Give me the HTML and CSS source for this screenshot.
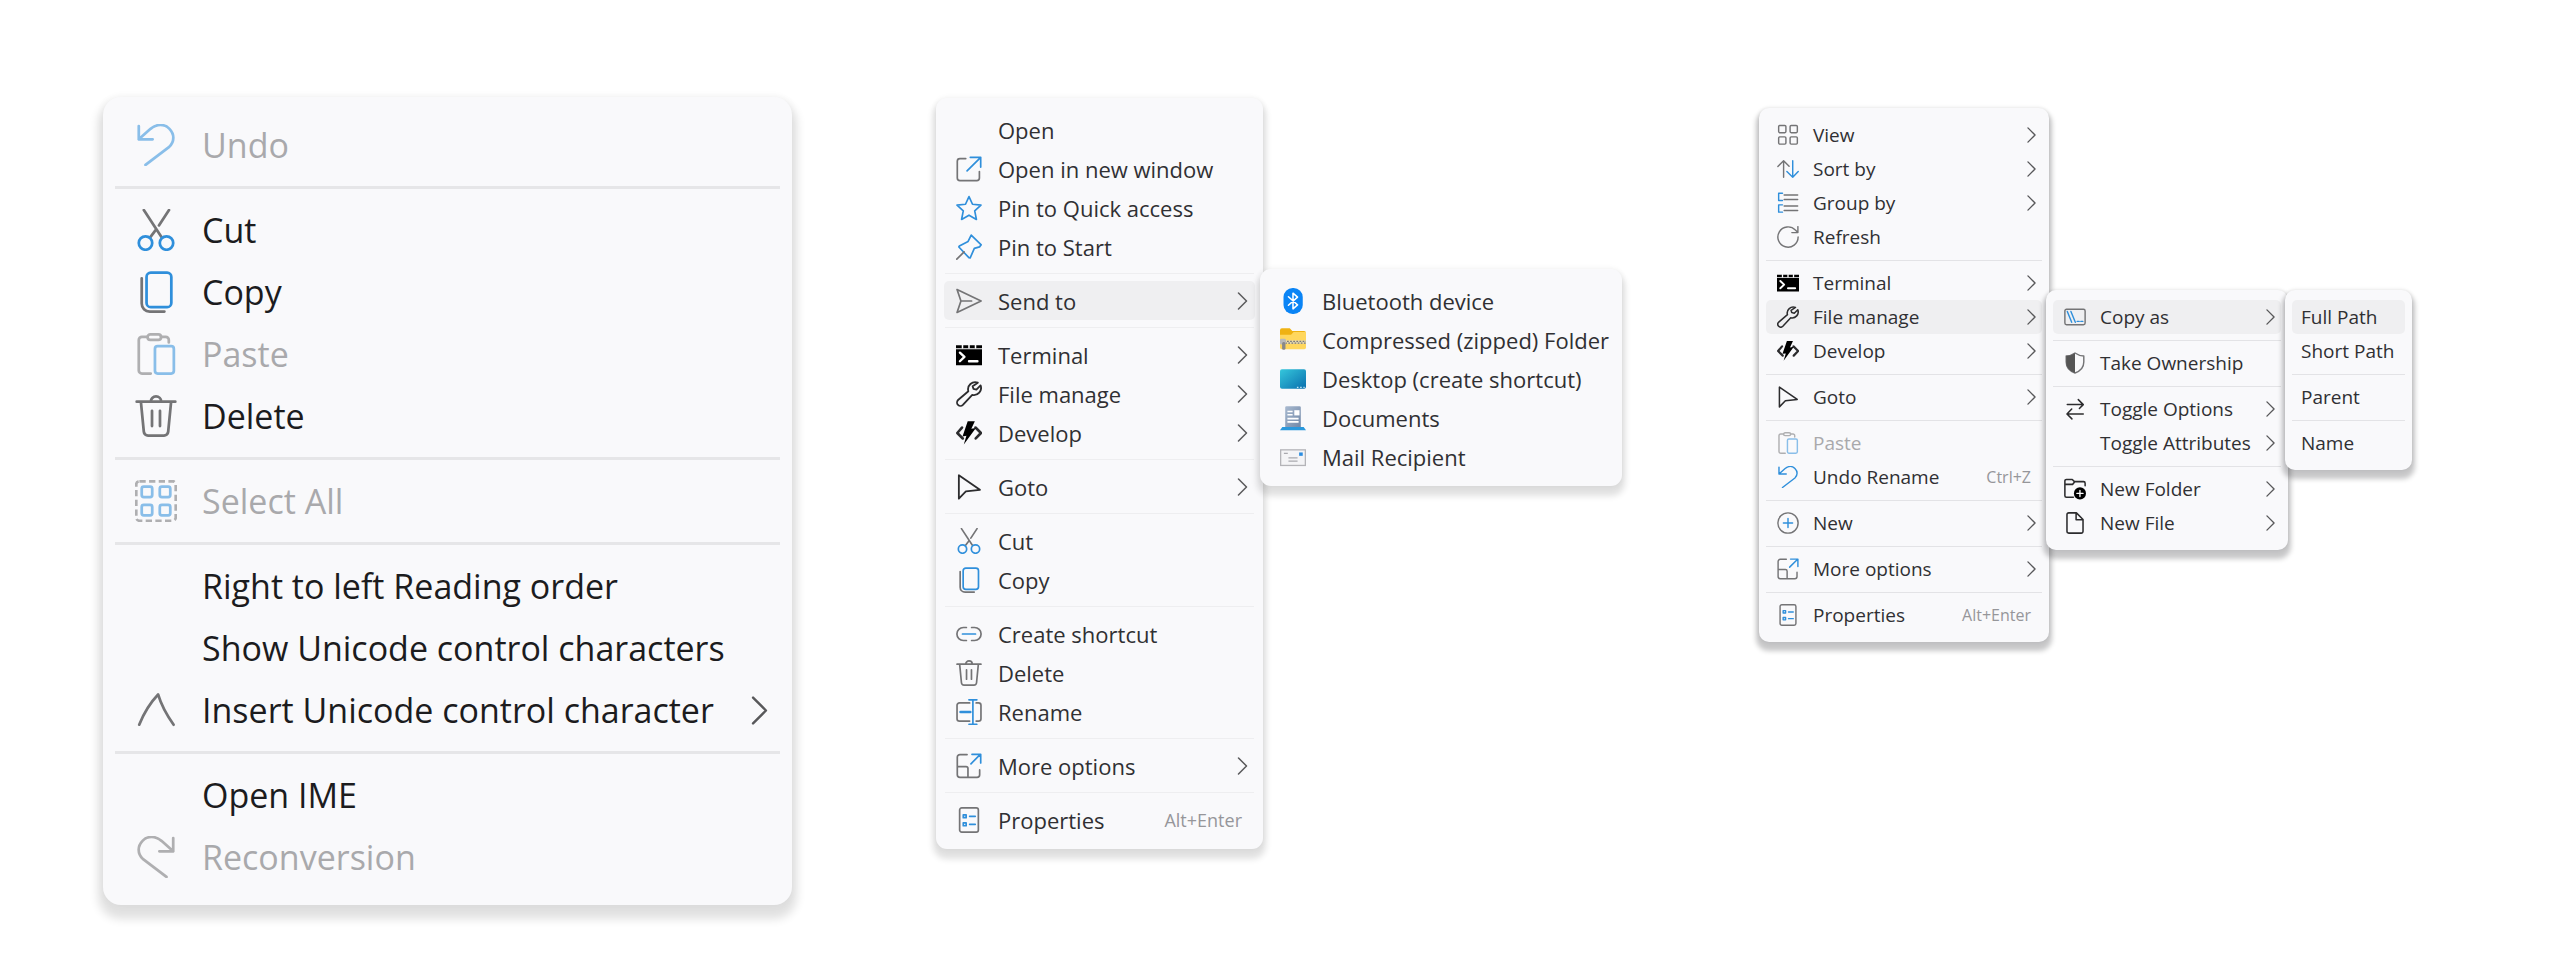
FILE: index.html
```
<!DOCTYPE html>
<html lang="en">
<head>
<meta charset="utf-8">
<title>Context menus</title>
<link rel="stylesheet" href="styles.css">
</head>
<body>
<svg class="sprite" aria-hidden="true">
  <defs>
    <linearGradient id="g-desktop" x1="0" y1="0" x2="1" y2="1"><stop offset="0" stop-color="#35c7dc"/><stop offset="1" stop-color="#0a6fae"/></linearGradient>
    <linearGradient id="g-doc" x1="0" y1="0" x2="1" y2="1"><stop offset="0" stop-color="#a9bad0"/><stop offset="1" stop-color="#6f86a6"/></linearGradient>
  </defs>
  <symbol id="i-undo" viewBox="0 0 20 20"><path class="b" d="M1.8 1v6.3h6.6M1.8 7.3l5.6-5C10.4-.2 14-.1 16.3 2.2c2.6 2.6 2.6 6.2 0 8.7L5 19.5"/></symbol>
  <symbol id="i-redo" viewBox="0 0 20 20"><path class="k" d="M18.2 1v6.3h-6.6M18.2 7.3l-5.6-5C9.6-.2 6-.1 3.7 2.2c-2.6 2.6-2.6 6.2 0 8.7L15 19.5"/></symbol>
  <symbol id="i-cut" viewBox="0 0 20 20"><path class="k" d="M4.2.5L12.6 13.3M16.2.5l-4.8 7.3M10 9.800l-2.6 3.5"/><circle class="b" cx="5" cy="16.2" r="3.2"/><circle class="b" cx="15" cy="16.2" r="3.2"/></symbol>
  <symbol id="i-copy" viewBox="0 0 20 20"><path class="k" d="M3.2 3.5v12c0 2.2 1.6 3.8 3.8 3.8h7"/><rect class="b" x="5.5" y=".8" width="11.8" height="16.4" rx="2"/></symbol>
  <symbol id="i-paste" viewBox="0 0 20 20"><path class="k" d="M6 1.800H3.3a1.500 1.500 0 0 0-1.500 1.500v14.500a1.500 1.500 0 0 0 1.500 1.500h4.200M12.400 1.800h2.200a1.500 1.500 0 0 1 1.500 1.500v1.200"/><rect class="k" x="6" y=".7" width="6.4" height="2.6" rx="1.3"/><rect class="b" x="9.5" y="6.3" width="9" height="13" rx="1.3"/></symbol>
  <symbol id="i-delete" viewBox="0 0 20 20"><path class="k" d="M.8 3.200h18.400M7.500 3.200a2.500 2.500 0 0 1 5 0M2.800 3.200l1.400 14.300a2 2 0 0 0 2 1.800h7.600a2 2 0 0 0 2-1.800l1.400-14.300M8.100 7.500v7.300M11.900 7.500v7.300"/></symbol>
  <symbol id="i-select" viewBox="0 0 20 20"><rect class="k butt" x=".6" y=".6" width="18.8" height="18.8" rx="1.5" stroke-dasharray="3 1.6"/><rect class="b" x="3.2" y="3.2" width="5" height="5" rx="1"/><rect class="b" x="11.8" y="3.2" width="5" height="5" rx="1"/><rect class="b" x="3.2" y="11.8" width="5" height="5" rx="1"/><rect class="b" x="11.8" y="11.8" width="5" height="5" rx="1"/></symbol>
  <symbol id="i-caret" viewBox="0 0 20 20"><path class="k" d="M2 17C4.400 11 7 6.800 11 2.600c1.600 5.400 4.200 10 7.400 14.400"/></symbol>
  <symbol id="i-window" viewBox="0 0 20 20"><path class="k" d="M7.500 2H3a2 2 0 0 0-2 2v13a2 2 0 0 0 2 2h13a2 2 0 0 0 2-2v-5"/><path class="b" d="M8.500 11.500L19 1M11 1h8v7.500"/></symbol>
  <symbol id="i-star" viewBox="0 0 20 20"><path class="b" d="M10 1.200l2.700 5.900 6.500.7-4.800 4.400 1.300 6.600-5.700-3.300-5.700 3.300 1.300-6.600L.8 7.800l6.500-.7z"/></symbol>
  <symbol id="i-pin" viewBox="0 0 20 20"><path class="b" d="M11.700.8l7.700 7.500-1.300 1.600-4 1.200-3.200 7.300-1-.2L2.200 10l.4-.8 6.700-3.500z"/><path class="k" d="M6.200 13.800L.6 19.400"/></symbol>
  <symbol id="i-send" viewBox="0 0 20 20"><path class="k" d="M.8 1.200L19.300 10 .8 18.800 3.800 10zM3.800 10H12"/></symbol>
  <symbol id="i-terminal" viewBox="0 0 20 20"><path d="M0 2.500h20v2.300H0zM0 5.500h20v12.300H0z"/><path class="w" d="M3 8.200l3.500 3.300L3 14.800M10 14.800h6.500"/><path class="w thin" d="M5 2.500v2M10 2.500v2M15 2.500v2"/></symbol>
  <symbol id="i-wrench" viewBox="0 0 20 20"><path class="d" d="M16.800 1.300a5.500 5.500 0 0 0-7.300 6.600L1.600 14.600a2.600 2.600 0 0 0 3.700 3.800l7.200-7.700a5.500 5.500 0 0 0 6.400-7.300l-3.200 3.200-2.300-.6-.6-2z"/></symbol>
  <symbol id="i-develop" viewBox="0 0 20 20"><path class="d bold" d="M4.600 5.800L1 10l4.200 4.200M15 5.800L19.200 10l-4 4.200"/><path d="M9 1h5.500L11.800 6.800l3.500-.6L6 18.800l2-6.600-3 .4z"/></symbol>
  <symbol id="i-goto" viewBox="0 0 20 20"><path class="d" d="M2.200 1v18l5.400-5.600 10.800-1.200z"/></symbol>
  <symbol id="i-link" viewBox="0 0 20 20"><path class="k" d="M8 5H5.700a5 5 0 0 0 0 10H8M12 5h2.300a5 5 0 0 1 0 10H12"/><path class="b" d="M5 10h10"/></symbol>
  <symbol id="i-rename" viewBox="0 0 20 20"><path class="k" d="M10.500 3H2.700A1.900 1.900 0 0 0 .8 4.900v10.200A1.900 1.900 0 0 0 2.700 17h7.800M15.500 3h1.800a1.900 1.900 0 0 1 1.900 1.900v10.200a1.900 1.900 0 0 1-1.900 1.900h-1.800"/><path class="b" d="M13 .8v18.400M10 .6h6M10 19.400h6"/><path class="b bold" d="M3.500 10h7.500"/></symbol>
  <symbol id="i-more" viewBox="0 0 20 20"><path class="k" d="M8.500 1.200H3a2 2 0 0 0-2 2V16.800a2 2 0 0 0 2 2h13.200a2 2 0 0 0 2-2V13M1 10.500h6.700a1.500 1.500 0 0 1 1.500 1.500v6.800"/><path class="b" d="M11.500 8.300l7-7M12.300 1h6.700v6.700"/></symbol>
  <symbol id="i-props" viewBox="0 0 20 20"><rect class="k" x="2.8" y=".7" width="14.4" height="18.6" rx="1.6"/><path class="b" d="M5.600 6h2.200v2.200H5.600zM5.600 12.200h2.200v2.200H5.600zM10.500 7.200h4.300M10.500 13.300h4.300"/></symbol>
  <symbol id="i-bluetooth" viewBox="0 0 20 20"><rect x="2.7" y="0" width="14.8" height="20" rx="7" fill="#0a84f5"/><path class="w thin" d="M6.500 6.700l7 6.300-3.500 3V4l3.500 3-7 6.300"/></symbol>
  <symbol id="i-zip" viewBox="0 0 20 20"><path d="M0 2.500a1.500 1.500 0 0 1 1.500-1.500h6l2 2h9A1.500 1.500 0 0 1 20 4.500V8H0z" fill="#efb213"/><path d="M0 6h8.500L10.500 3.800H20V15.800a1.300 1.300 0 0 1-1.300 1.300H1.300A1.300 1.300 0 0 1 0 15.800z" fill="#ffd75e"/><path d="M2 10.300h18v2.600H2z" fill="#e6d9b0"/><path d="M3 11h17M4 12.400h16" stroke="#777" stroke-width="1" stroke-dasharray="1.3 1.1"/><rect x="0" y="9" width="4.5" height="4.5" rx="1" fill="#b9b9b9"/><rect x="1.6" y="11.5" width="2.6" height="6" rx="1.2" fill="#888"/></symbol>
  <symbol id="i-desktop" viewBox="0 0 20 20"><rect x="0" y="2.5" width="20" height="15" rx="1.5" fill="url(#g-desktop)"/><path d="M13 16.500h1.200M15.500 16.500h1.200M18 16.500h1" stroke="#bfe6f5" stroke-width="1"/></symbol>
  <symbol id="i-docs" viewBox="0 0 20 20"><rect x="4" y="1" width="12" height="17" rx="1" fill="url(#g-doc)"/><path d="M5.700 5h4M5.700 7.500h4M5.700 10.500h8.600M5.700 13h8.600" stroke="#fff" stroke-width="1.2"/><path d="M11 4h4v4h-4z" fill="#fff"/><path d="M1.800 17h16.400L20 19.500H0z" fill="#2a98dc"/></symbol>
  <symbol id="i-mail" viewBox="0 0 20 20"><rect x=".5" y="4.500" width="19" height="12" fill="#f4f4f6" stroke="#b4b4b8"/><path d="M3 7.200h3M6.500 10.700h7M6.500 13.200h7" stroke="#a9a9ae" stroke-width="1"/><path d="M14.700 6.500h2.800v2.600h-2.800z" fill="#2b8de0"/></symbol>
  <symbol id="i-view" viewBox="0 0 20 20"><rect class="k" x="1.5" y="1.3" width="6.6" height="6.6" rx="1"/><rect class="k" x="11.9" y="1.3" width="6.6" height="6.6" rx="1"/><rect class="k" x="1.5" y="11.7" width="6.6" height="6.6" rx="1"/><rect class="k" x="11.9" y="11.7" width="6.6" height="6.6" rx="1"/></symbol>
  <symbol id="i-sort" viewBox="0 0 20 20"><path class="k" d="M6 17.500V2.500M.8 7.700L6 2.500l5 5"/><path class="b" d="M14.300 2.500v15M9 12.300l5.300 5.200 5-5.200"/></symbol>
  <symbol id="i-group" viewBox="0 0 20 20"><path class="b" d="M5 1.200H1.500v6.600H5M5 11.700H1.500v6.600H5"/><path class="k" d="M6.500 2.800h12.300M6.500 6.800h12.300M6.500 12.800h12.300M6.500 16.800h12.300"/></symbol>
  <symbol id="i-refresh" viewBox="0 0 20 20"><path class="k" d="M19.200 10A9.200 9.200 0 1 1 16.700 3.700L19 6M19 .6V6h-5.500"/></symbol>
  <symbol id="i-new" viewBox="0 0 20 20"><circle class="k" cx="10" cy="10" r="9.200"/><path class="b" d="M10 5.800v8.400M5.800 10h8.400"/></symbol>
  <symbol id="i-path" viewBox="0 0 20 20"><rect class="k" x=".8" y="3" width="18.4" height="14" rx="1.5"/><path class="b" d="M3 5l4 9.800M6.300 5l4 9.800M12 14h1.800M15.300 14h1.800"/></symbol>
  <symbol id="i-shield" viewBox="0 0 20 20"><path class="k" d="M10 .9c2.600 1.800 5 2.600 8 2.800v5.500c0 4.700-3 8.200-8 9.900-5-1.700-8-5.200-8-9.900V3.700C5 3.500 7.400 2.700 10 .9z"/><path d="M10 .9v18.200c-5-1.700-8-5.200-8-9.900V3.700C5 3.500 7.400 2.700 10 .9z" fill="#555"/></symbol>
  <symbol id="i-toggle" viewBox="0 0 20 20"><path class="d" d="M3 6h14.500M13 1.500L17.500 6 14 9.500M17.500 14.500H3M7 10L2.700 14.500 7.200 19"/></symbol>
  <symbol id="i-folder" viewBox="0 0 20 20"><path class="d" d="M8.500 17.500H2.200A1.400 1.400 0 0 1 .8 16.100V2.700a1.400 1.400 0 0 1 1.400-1.400h5.300l2 2h8.300a1.400 1.400 0 0 1 1.400 1.400V7M.8 5.800h7l2-2.300"/><circle cx="14.5" cy="14" r="5.5"/><path class="w thin" d="M14.500 11.200v5.600M11.700 14h5.600"/></symbol>
  <symbol id="i-file" viewBox="0 0 20 20"><path class="d" d="M4.300.8h7l6 6v10.800a1.600 1.600 0 0 1-1.600 1.600H4.300a1.600 1.600 0 0 1-1.600-1.600V2.400A1.600 1.600 0 0 1 4.300.8zM11 .8v6.300h6.300"/></symbol>
  <symbol id="i-chev" viewBox="0 0 10 18"><path class="c" d="M1 1l8 8-8 8"/></symbol>
</svg>

<main class="board">
  <section class="column">
    <ul class="menu menu-large" role="menu" aria-label="Text box menu">
      <li><button class="item" disabled><svg class="icon"><use href="#i-undo"/></svg><span class="label">Undo</span></button></li>
      <li class="rule" role="separator"></li>
      <li><button class="item"><svg class="icon"><use href="#i-cut"/></svg><span class="label">Cut</span></button></li>
      <li><button class="item"><svg class="icon"><use href="#i-copy"/></svg><span class="label">Copy</span></button></li>
      <li><button class="item" disabled><svg class="icon"><use href="#i-paste"/></svg><span class="label">Paste</span></button></li>
      <li><button class="item"><svg class="icon"><use href="#i-delete"/></svg><span class="label">Delete</span></button></li>
      <li class="rule" role="separator"></li>
      <li><button class="item" disabled><svg class="icon"><use href="#i-select"/></svg><span class="label">Select All</span></button></li>
      <li class="rule" role="separator"></li>
      <li><button class="item"><span class="icon"></span><span class="label">Right to left Reading order</span></button></li>
      <li><button class="item"><span class="icon"></span><span class="label">Show Unicode control characters</span></button></li>
      <li><button class="item"><svg class="icon"><use href="#i-caret"/></svg><span class="label">Insert Unicode control character</span><svg class="chev"><use href="#i-chev"/></svg></button></li>
      <li class="rule" role="separator"></li>
      <li><button class="item"><span class="icon"></span><span class="label">Open IME</span></button></li>
      <li><button class="item" disabled><svg class="icon"><use href="#i-redo"/></svg><span class="label">Reconversion</span></button></li>
    </ul>
  </section>

  <section class="column">
    <ul class="menu menu-medium" role="menu" aria-label="Folder menu">
      <li><button class="item"><span class="icon"></span><span class="label">Open</span></button></li>
      <li><button class="item"><svg class="icon"><use href="#i-window"/></svg><span class="label">Open in new window</span></button></li>
      <li><button class="item"><svg class="icon"><use href="#i-star"/></svg><span class="label">Pin to Quick access</span></button></li>
      <li><button class="item"><svg class="icon"><use href="#i-pin"/></svg><span class="label">Pin to Start</span></button></li>
      <li class="rule" role="separator"></li>
      <li class="parent"><button class="item active"><svg class="icon"><use href="#i-send"/></svg><span class="label">Send to</span><svg class="chev"><use href="#i-chev"/></svg></button>
        <ul class="menu submenu send-menu" role="menu" aria-label="Send to">
          <li><button class="item"><svg class="icon"><use href="#i-bluetooth"/></svg><span class="label">Bluetooth device</span></button></li>
          <li><button class="item"><svg class="icon"><use href="#i-zip"/></svg><span class="label">Compressed (zipped) Folder</span></button></li>
          <li><button class="item"><svg class="icon"><use href="#i-desktop"/></svg><span class="label">Desktop (create shortcut)</span></button></li>
          <li><button class="item"><svg class="icon"><use href="#i-docs"/></svg><span class="label">Documents</span></button></li>
          <li><button class="item"><svg class="icon"><use href="#i-mail"/></svg><span class="label">Mail Recipient</span></button></li>
        </ul>
      </li>
      <li class="rule" role="separator"></li>
      <li><button class="item"><svg class="icon"><use href="#i-terminal"/></svg><span class="label">Terminal</span><svg class="chev"><use href="#i-chev"/></svg></button></li>
      <li><button class="item"><svg class="icon"><use href="#i-wrench"/></svg><span class="label">File manage</span><svg class="chev"><use href="#i-chev"/></svg></button></li>
      <li><button class="item"><svg class="icon"><use href="#i-develop"/></svg><span class="label">Develop</span><svg class="chev"><use href="#i-chev"/></svg></button></li>
      <li class="rule" role="separator"></li>
      <li><button class="item"><svg class="icon"><use href="#i-goto"/></svg><span class="label">Goto</span><svg class="chev"><use href="#i-chev"/></svg></button></li>
      <li class="rule" role="separator"></li>
      <li><button class="item"><svg class="icon"><use href="#i-cut"/></svg><span class="label">Cut</span></button></li>
      <li><button class="item"><svg class="icon"><use href="#i-copy"/></svg><span class="label">Copy</span></button></li>
      <li class="rule" role="separator"></li>
      <li><button class="item"><svg class="icon"><use href="#i-link"/></svg><span class="label">Create shortcut</span></button></li>
      <li><button class="item"><svg class="icon"><use href="#i-delete"/></svg><span class="label">Delete</span></button></li>
      <li><button class="item"><svg class="icon"><use href="#i-rename"/></svg><span class="label">Rename</span></button></li>
      <li class="rule" role="separator"></li>
      <li><button class="item"><svg class="icon"><use href="#i-more"/></svg><span class="label">More options</span><svg class="chev"><use href="#i-chev"/></svg></button></li>
      <li class="rule" role="separator"></li>
      <li><button class="item"><svg class="icon"><use href="#i-props"/></svg><span class="label">Properties</span><kbd class="keys">Alt+Enter</kbd></button></li>
    </ul>
  </section>

  <section class="column">
    <ul class="menu menu-small" role="menu" aria-label="Desktop menu">
      <li><button class="item"><svg class="icon"><use href="#i-view"/></svg><span class="label">View</span><svg class="chev"><use href="#i-chev"/></svg></button></li>
      <li><button class="item"><svg class="icon"><use href="#i-sort"/></svg><span class="label">Sort by</span><svg class="chev"><use href="#i-chev"/></svg></button></li>
      <li><button class="item"><svg class="icon"><use href="#i-group"/></svg><span class="label">Group by</span><svg class="chev"><use href="#i-chev"/></svg></button></li>
      <li><button class="item"><svg class="icon"><use href="#i-refresh"/></svg><span class="label">Refresh</span></button></li>
      <li class="rule" role="separator"></li>
      <li><button class="item"><svg class="icon"><use href="#i-terminal"/></svg><span class="label">Terminal</span><svg class="chev"><use href="#i-chev"/></svg></button></li>
      <li class="parent"><button class="item active"><svg class="icon"><use href="#i-wrench"/></svg><span class="label">File manage</span><svg class="chev"><use href="#i-chev"/></svg></button>
        <ul class="menu submenu file-menu" role="menu" aria-label="File manage">
          <li class="parent"><button class="item active"><svg class="icon"><use href="#i-path"/></svg><span class="label">Copy as</span><svg class="chev"><use href="#i-chev"/></svg></button>
            <ul class="menu submenu path-menu" role="menu" aria-label="Copy as">
              <li><button class="item active"><span class="label">Full Path</span></button></li>
              <li><button class="item"><span class="label">Short Path</span></button></li>
              <li class="rule" role="separator"></li>
              <li><button class="item"><span class="label">Parent</span></button></li>
              <li class="rule" role="separator"></li>
              <li><button class="item"><span class="label">Name</span></button></li>
            </ul>
          </li>
          <li class="rule" role="separator"></li>
          <li><button class="item"><svg class="icon"><use href="#i-shield"/></svg><span class="label">Take Ownership</span></button></li>
          <li class="rule" role="separator"></li>
          <li><button class="item"><svg class="icon"><use href="#i-toggle"/></svg><span class="label">Toggle Options</span><svg class="chev"><use href="#i-chev"/></svg></button></li>
          <li><button class="item"><span class="icon"></span><span class="label">Toggle Attributes</span><svg class="chev"><use href="#i-chev"/></svg></button></li>
          <li class="rule" role="separator"></li>
          <li><button class="item"><svg class="icon"><use href="#i-folder"/></svg><span class="label">New Folder</span><svg class="chev"><use href="#i-chev"/></svg></button></li>
          <li><button class="item"><svg class="icon"><use href="#i-file"/></svg><span class="label">New File</span><svg class="chev"><use href="#i-chev"/></svg></button></li>
        </ul>
      </li>
      <li><button class="item"><svg class="icon"><use href="#i-develop"/></svg><span class="label">Develop</span><svg class="chev"><use href="#i-chev"/></svg></button></li>
      <li class="rule" role="separator"></li>
      <li><button class="item"><svg class="icon"><use href="#i-goto"/></svg><span class="label">Goto</span><svg class="chev"><use href="#i-chev"/></svg></button></li>
      <li class="rule" role="separator"></li>
      <li><button class="item" disabled><svg class="icon"><use href="#i-paste"/></svg><span class="label">Paste</span></button></li>
      <li><button class="item"><svg class="icon"><use href="#i-undo"/></svg><span class="label">Undo Rename</span><kbd class="keys">Ctrl+Z</kbd></button></li>
      <li class="rule" role="separator"></li>
      <li><button class="item"><svg class="icon"><use href="#i-new"/></svg><span class="label">New</span><svg class="chev"><use href="#i-chev"/></svg></button></li>
      <li class="rule" role="separator"></li>
      <li><button class="item"><svg class="icon"><use href="#i-more"/></svg><span class="label">More options</span><svg class="chev"><use href="#i-chev"/></svg></button></li>
      <li class="rule" role="separator"></li>
      <li><button class="item"><svg class="icon"><use href="#i-props"/></svg><span class="label">Properties</span><kbd class="keys">Alt+Enter</kbd></button></li>
    </ul>
  </section>
</main>
</body>
</html>
```
FILE: styles.css
```
* { box-sizing: border-box; }

body {
  margin: 0;
  background: #fff;
  color: #303033;
  font-family: "Open Sans", "Noto Sans", sans-serif;
}

.sprite { position: absolute; width: 0; height: 0; }

.board {
  display: grid;
  grid-template-columns: 833fr 823fr 801fr;
  padding: 97px 0 60px 103px;
}

/* Menu shell; each size sets its own metrics */
.menu {
  width: max-content;
  min-width: var(--width);
  margin: 0;
  padding: var(--pad-top) 0 var(--pad-bottom);
  list-style: none;
  border-radius: var(--radius);
  background: #f9f9fb;
  box-shadow: var(--shadow);
  font-size: var(--text);
}

.menu-large {
  --width: 689px;
  --pad-top: 17px;
  --pad-bottom: 17px;
  --radius: 18px;
  --text: 34px;
  --row: 62px;
  --inset: 12px;
  --item-left: 20px;
  --icon: 42px;
  --icon-gap: 25px;
  --rule: 23px;
  --rule-inset: 12px;
  --rule-weight: 3px;
  --rule-color: #e6e6e8;
  --chev-w: 17px;
  --chev-h: 29px;
  --chev-right: 12px;
  --shadow: 0 9px 10px 5px rgba(0, 0, 0, .12), 0 0 10px rgba(0, 0, 0, .04);
  color: #1c1c1e;
}

.menu-medium {
  --width: 327px;
  --pad-top: 12px;
  --pad-bottom: 10px;
  --radius: 11px;
  --text: 22px;
  --keys: 18px;
  --row: 39px;
  --inset: 8px;
  --item-left: 12px;
  --icon: 26px;
  --icon-gap: 16px;
  --rule: 15px;
  --rule-inset: 9px;
  --rule-weight: 1px;
  --rule-color: #eeeef0;
  --chev-w: 11px;
  --chev-h: 18px;
  --chev-right: 7px;
  --keys-right: 13px;
  --shadow: 0 7px 6px 3px rgba(0, 0, 0, .12), 0 0 6px rgba(0, 0, 0, .06);
}

.column .menu-medium { margin-top: 1px; }

.menu-small {
  --width: 290px;
  --pad-top: 10px;
  --pad-bottom: 10px;
  --radius: 10px;
  --text: 19px;
  --keys: 16px;
  --row: 34px;
  --inset: 7px;
  --item-left: 11px;
  --icon: 22px;
  --icon-gap: 14px;
  --rule: 12px;
  --rule-inset: 7px;
  --rule-weight: 1px;
  --rule-color: #e3e3e6;
  --chev-w: 9px;
  --chev-h: 16px;
  --chev-right: 6px;
  --keys-right: 11px;
  --shadow: 0 6px 5px 3px rgba(0, 0, 10, .22), 0 0 4px rgba(0, 0, 10, .1);
  margin-top: 11px;
}

.item {
  display: flex;
  align-items: center;
  width: calc(100% - 2 * var(--inset));
  height: var(--row);
  margin: 0 var(--inset);
  padding: 0 0 0 var(--item-left);
  border: 0;
  border-radius: 5px;
  background: none;
  color: inherit;
  font: inherit;
  line-height: 1;
  text-align: left;
  white-space: nowrap;
}

.item.active { background: #efeff1; }

.label { flex: 1; }

.item:disabled .label { color: #a9a9ac; }
.item:disabled .icon { opacity: .55; }

.icon {
  flex: none;
  width: var(--icon);
  height: var(--icon);
  margin-right: var(--icon-gap);
}

.chev {
  flex: none;
  width: var(--chev-w);
  height: var(--chev-h);
  margin: 0 var(--chev-right) 0 12px;
}

.keys {
  margin-right: var(--keys-right);
  color: #96969a;
  font-family: inherit;
  font-size: var(--keys);
}

.rule {
  display: flex;
  align-items: center;
  height: var(--rule);
  padding: 0 var(--rule-inset);
}

.rule::before {
  content: "";
  flex: 1;
  height: var(--rule-weight);
  background: var(--rule-color);
}

/* Fly-out menus overlap their parent's right edge */
.parent { position: relative; }

.submenu {
  position: absolute;
  z-index: 1;
  top: calc(-1 * var(--pad-top));
  left: calc(100% - 3px);
}

.send-menu { --width: 362px; }
.file-menu { --width: 242px; }
.path-menu { --width: 127px; --item-left: 9px; }

/* Icon strokes */
.k, .b, .d, .w, .c {
  fill: none;
  stroke-width: 1.3;
  stroke-linecap: round;
  stroke-linejoin: round;
}
.k { stroke: #747476; }
.b { stroke: #2f8fdb; }
.d { stroke: #2c2c2e; stroke-width: 1.4; }
.w { stroke: #fff; stroke-width: 1.8; }
.c { stroke: #58585a; stroke-width: 1.5; }
.thin { stroke-width: 1.2; }
.bold { stroke-width: 2; }
.butt { stroke-linecap: butt; }
```
